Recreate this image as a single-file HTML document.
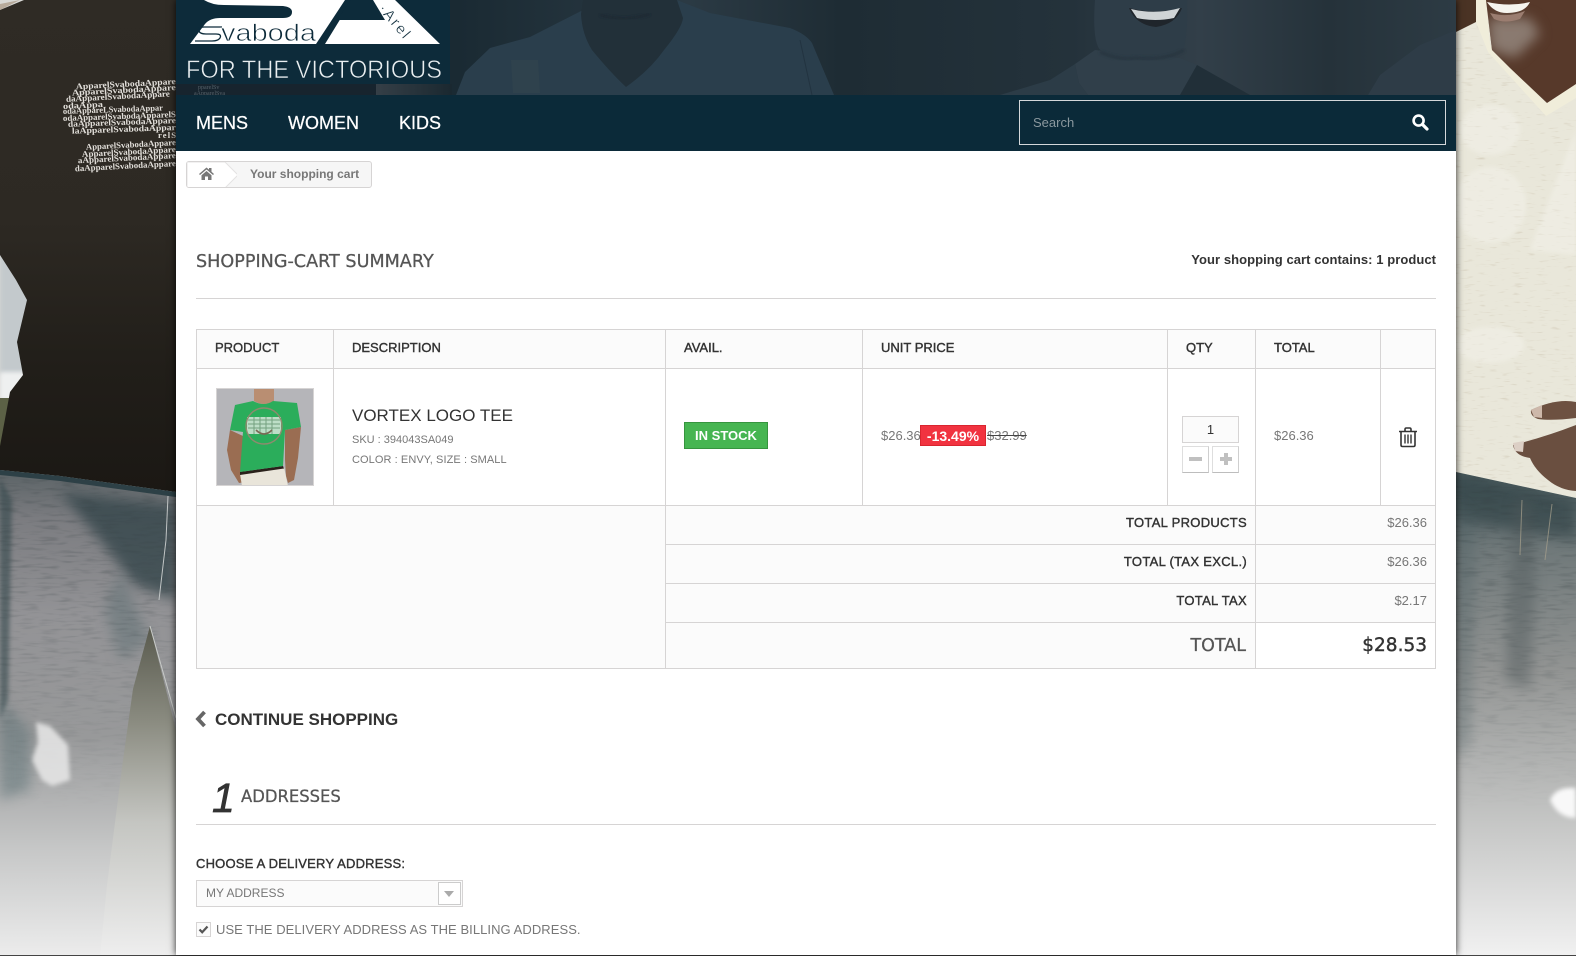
<!DOCTYPE html>
<html lang="en">
<head>
<meta charset="utf-8">
<title>Your shopping cart</title>
<style>
html,body{margin:0;padding:0;width:1576px;height:956px;overflow:hidden;background:#fff;font-family:"Liberation Sans",sans-serif;color:#777}
*{box-sizing:border-box}
.abs,.t{position:absolute}
.t{white-space:nowrap;line-height:20px}
#bg{position:absolute;left:0;top:0}
#panel{position:absolute;left:176px;top:0;width:1280px;height:955px;background:#fff;box-shadow:0 0 7px rgba(0,0,0,.85)}
#head{position:absolute;left:176px;top:0}
#nav{position:absolute;left:176px;top:95px;width:1280px;height:56px;background:#0b2a39}
#search{position:absolute;left:1019px;top:100px;width:427px;height:45px;border:1px solid #d4d8da;background:#0b2a39}
.nl{color:#fff;font-size:18px;top:113px;-webkit-text-stroke:.25px #fff}
.med{color:#333;font-size:13px;-webkit-text-stroke:.4px #333;letter-spacing:.2px}
.od{font-family:"DejaVu Sans",sans-serif;color:#555;-webkit-text-stroke:.25px #555}
#crumb{position:absolute;left:186px;top:161px;width:186px;height:27px;border:1px solid #d6d4d4;border-radius:3px;background:#f6f6f6;overflow:hidden}
#hr1,#hr2{position:absolute;left:196px;width:1240px;height:1px;background:#d6d4d4}
table{position:absolute;left:196px;top:329px;width:1239px;border-collapse:collapse;table-layout:fixed;font-size:13px}
td,th{border:1px solid #d6d4d4;padding:0;font-weight:normal;overflow:hidden}
th{background:#fbfbfb;text-align:left;padding:0 0 4px 18px;color:#333;-webkit-text-stroke:.4px #333;font-size:13px}
.s{background:#fbfbfb}
.lab{text-align:right;padding:0 8px 5px 0;color:#333;-webkit-text-stroke:.4px #333;letter-spacing:.3px}
.val{text-align:right;padding:0 8px 5px 0;color:#777}
</style>
</head>
<body>
<svg id="bg" width="1576" height="956" viewBox="0 0 1576 956" xmlns="http://www.w3.org/2000/svg">
<defs>
<linearGradient id="tee" x1="0" y1="0" x2="0" y2="492" gradientUnits="userSpaceOnUse"><stop offset="0" stop-color="#2f2b25"/><stop offset=".45" stop-color="#2d2923"/><stop offset=".75" stop-color="#211e19"/><stop offset="1" stop-color="#1b1814"/></linearGradient>
<linearGradient id="jeanL" x1="0" y1="470" x2="0" y2="956" gradientUnits="userSpaceOnUse"><stop offset="0" stop-color="#5a6265"/><stop offset=".1" stop-color="#7b7c80"/><stop offset=".3" stop-color="#939396"/><stop offset=".55" stop-color="#98999a"/><stop offset=".78" stop-color="#c6c7c7"/><stop offset="1" stop-color="#ececec"/></linearGradient>
<linearGradient id="jeanR" x1="0" y1="480" x2="0" y2="956" gradientUnits="userSpaceOnUse"><stop offset="0" stop-color="#4a5a5d"/><stop offset=".15" stop-color="#70797a"/><stop offset=".4" stop-color="#929493"/><stop offset=".7" stop-color="#c2c3c2"/><stop offset="1" stop-color="#f1f1f1"/></linearGradient>
<linearGradient id="bgL" x1="0" y1="620" x2="0" y2="956" gradientUnits="userSpaceOnUse"><stop offset="0" stop-color="#55564a"/><stop offset=".3" stop-color="#8a8b80"/><stop offset=".6" stop-color="#c4c5c1"/><stop offset="1" stop-color="#eeeeee"/></linearGradient>
<linearGradient id="mg" x1="0" y1="470" x2="0" y2="956" gradientUnits="userSpaceOnUse"><stop offset="0" stop-color="#fff"/><stop offset=".4" stop-color="#fff" stop-opacity=".5"/><stop offset=".7" stop-color="#fff" stop-opacity="0"/></linearGradient>
<mask id="mf" maskUnits="userSpaceOnUse" x="0" y="0" width="1576" height="956"><rect x="0" y="470" width="1576" height="486" fill="url(#mg)"/></mask>
<filter id="streak" x="0" y="0" width="100%" height="100%" color-interpolation-filters="sRGB"><feTurbulence type="fractalNoise" baseFrequency="0.05 0.35" numOctaves="2" seed="4"/><feColorMatrix values="0 0 0 0 .22  0 0 0 0 .26  0 0 0 0 .27  3 0 0 0 -1.5"/></filter>
<filter id="fleck" x="0" y="0" width="100%" height="100%" color-interpolation-filters="sRGB"><feTurbulence type="fractalNoise" baseFrequency="0.08 0.5" numOctaves="2" seed="9"/><feColorMatrix values="0 0 0 0 .62  0 0 0 0 .54  0 0 0 0 .42  4 0 0 0 -2.5"/></filter>
<filter id="b2" x="-30%" y="-30%" width="160%" height="160%" color-interpolation-filters="sRGB"><feGaussianBlur stdDeviation="2"/></filter>
<filter id="b5" x="-60%" y="-60%" width="220%" height="220%" color-interpolation-filters="sRGB"><feGaussianBlur stdDeviation="6"/></filter>
<clipPath id="cjl"><path d="M0,470 L60,476 L176,492 V730 L150,626 L133,689 L123,760 L107,885 L100,956 H0Z"/></clipPath>
<clipPath id="cjr"><path d="M1456,472 L1576,498 V956 H1456Z"/></clipPath>
<clipPath id="csr"><path d="M1456,30 L1476,20 L1490,50 L1546,103 L1576,84 V498 L1456,472Z"/></clipPath>
<clipPath id="cnk"><path d="M1486,0 H1576 V84 L1547,103 L1510,68 L1492,50Z"/></clipPath>
</defs>

<!-- left figure -->
<rect x="0" y="0" width="176" height="956" fill="#d9d9d6"/>
<rect x="0" y="255" width="40" height="120" fill="#c3c9cc" filter="url(#b2)"/>
<rect x="0" y="372" width="28" height="28" fill="#eef0f0" filter="url(#b2)"/>
<rect x="0" y="398" width="26" height="60" fill="#5c6146"/>
<rect x="0" y="620" width="176" height="336" fill="url(#bgL)"/>
<path d="M0,10 L24,0 H176 V492 L60,476 L0,470 V446 L10,392 L23,375 L17,342 L27,300 L16,280 L0,255Z" fill="url(#tee)"/>
<path d="M0,4 L20,0 L0,10Z" fill="#b7aa9b"/>
<g font-family="Liberation Serif,serif" font-weight="bold" font-size="8.6" fill="#e2dfda">
<text x="76" y="87" textLength="100" lengthAdjust="spacingAndGlyphs" transform="rotate(-3 120 87)">ApparelSvabodaAppare</text>
<text x="72" y="93" textLength="104" lengthAdjust="spacingAndGlyphs" transform="rotate(-3 120 93)">ApparelSvabodaAppare</text>
<text x="66" y="99" textLength="104" lengthAdjust="spacingAndGlyphs" transform="rotate(-3 120 99)">daApparelSvabodaAppare</text>
<text x="63" y="106" textLength="40" lengthAdjust="spacingAndGlyphs" transform="rotate(-3 120 106)">odaAppa</text>
<text x="63" y="112" textLength="100" lengthAdjust="spacingAndGlyphs" transform="rotate(-2 120 112)">odaAppareLSvabodaAppar</text>
<text x="63" y="119" textLength="113" lengthAdjust="spacingAndGlyphs" transform="rotate(-2 120 119)">odaApparelSvabodaApparelS</text>
<text x="68" y="125" textLength="108" lengthAdjust="spacingAndGlyphs" transform="rotate(-2 120 125)">daApparelSvabodaAppare</text>
<text x="72" y="132" textLength="104" lengthAdjust="spacingAndGlyphs" transform="rotate(-2 120 132)">laApparelSvabodaAppar</text>
<text x="158" y="138" textLength="18">relS</text>
<text x="86" y="148" textLength="90" lengthAdjust="spacingAndGlyphs" transform="rotate(-3 120 148)">ApparelSvabodaAppare</text>
<text x="82" y="155" textLength="94" lengthAdjust="spacingAndGlyphs" transform="rotate(-3 120 155)">ApparelSvabodaAppare</text>
<text x="78" y="161" textLength="98" lengthAdjust="spacingAndGlyphs" transform="rotate(-3 120 161)">aApparelSvabodaAppare</text>
<text x="75" y="169" textLength="101" lengthAdjust="spacingAndGlyphs" transform="rotate(-3 120 169)">daApparelSvabodaAppare</text>
</g>
<path d="M0,470 L60,476 L176,492 V730 L150,626 L133,689 L123,760 L107,885 L100,956 H0Z" fill="url(#jeanL)"/>
<g clip-path="url(#cjl)">
<path d="M60,492 L176,505 V600 L135,585 L100,540Z" fill="#35464b" opacity=".8" filter="url(#b5)"/>
<path d="M0,478 L12,500 L8,700 L0,720Z" fill="#34484c" opacity=".6" filter="url(#b2)"/>
<path d="M0,700 L30,730 L30,790 L0,800Z" fill="#5f7478" opacity=".5" filter="url(#b5)"/>
<path d="M120,570 L150,640 L120,660 L105,610Z" fill="#5f7074" opacity=".5" filter="url(#b5)"/>
<g mask="url(#mf)"><rect x="0" y="470" width="176" height="486" fill="#000" filter="url(#streak)" opacity=".3"/></g>
</g>
<path d="M0,470 L60,476 L176,492 V497 L60,481 L0,475Z" fill="#2d4046"/>
<path d="M168,496 L166,540 L159,600" fill="none" stroke="#c2c6c6" stroke-width="1"/>
<path d="M150,626 L176,718" fill="none" stroke="#c8cbc8" stroke-width="1"/>
<path d="M36,722 L50,726 L68,745 L70,780 L52,786 L42,780 L32,760 L38,742Z" fill="#e8e8e8" filter="url(#b2)" opacity=".85"/>

<!-- right figure -->
<rect x="1456" y="0" width="120" height="500" fill="#e9e7da"/>
<rect x="1456" y="20" width="120" height="470" fill="#000" filter="url(#fleck)" clip-path="url(#csr)" opacity=".22"/>
<path d="M1456,0 H1476 V22 L1456,32Z" fill="#4a3324"/>
<path d="M1476,22 L1488,52 L1546,116 L1576,98 V84 L1546,103 L1510,65 L1490,45 L1486,0 H1476Z" fill="#f0edda"/>
<path d="M1486,0 H1576 V84 L1547,103 L1510,68 L1492,50Z" fill="#57392a"/>
<g clip-path="url(#cnk)"><path d="M1488,18 H1530 L1540,34 L1515,58 L1490,50Z" fill="#8a7a70" filter="url(#b5)"/></g>
<path d="M1487,2 Q1510,7 1530,2 Q1525,13 1507,13 Q1494,13 1487,2Z" fill="#f6f4ee"/>
<path d="M1490,13 Q1508,18 1525,11 L1520,19 Q1505,24 1494,19Z" fill="#9b7d70"/>
<g fill="#f6f5ef" opacity=".4" filter="url(#b2)">
<ellipse cx="1490" cy="130" rx="30" ry="25"/>
<ellipse cx="1490" cy="205" rx="36" ry="38"/>
<path d="M1530,250 L1576,130 V255Z"/>
<ellipse cx="1490" cy="345" rx="34" ry="18"/>
</g>
<path d="M1531,410 Q1556,398 1576,402 V418 Q1552,421 1538,419 Q1530,416 1531,410Z" fill="#6d5141"/>
<path d="M1513,445 Q1545,437 1576,425 V491 Q1560,490 1548,480 Q1535,470 1530,458 Q1515,456 1513,445Z" fill="#6a4f40"/>
<path d="M1513,443 L1524,441 L1523,452 L1515,451Z" fill="#dccfc5"/>
<path d="M1531,410 L1542,405 L1542,418 L1534,417Z" fill="#cdb8aa"/>
<path d="M1456,472 L1576,498 V956 H1456Z" fill="url(#jeanR)"/>
<g clip-path="url(#cjr)">
<path d="M1456,475 L1576,500 V540 L1456,520Z" fill="#2f4145" opacity=".6" filter="url(#b5)"/>
<g mask="url(#mf)"><rect x="1456" y="472" width="120" height="484" fill="#000" filter="url(#streak)" opacity=".35"/></g>
<path d="M1514,500 L1510,580 L1505,680 L1530,690 L1535,580 L1530,500Z" fill="#50595b" opacity=".45" filter="url(#b5)"/>
<path d="M1456,500 V760 L1470,740 L1475,520Z" fill="#4d6064" opacity=".35" filter="url(#b5)"/>
</g>
<path d="M1522,500 L1520,555 M1552,504 L1545,560" stroke="#a9a38f" stroke-width="1" fill="none" opacity=".7"/>
<path d="M1550,800 Q1556,786 1576,788 V818 Q1558,818 1550,800Z" fill="#f8f8f8" filter="url(#b2)"/>
<rect x="0" y="955" width="1576" height="1" fill="#444"/>
</svg>

<div id="panel"></div>

<svg id="head" width="1280" height="95" viewBox="176 0 1280 95" xmlns="http://www.w3.org/2000/svg">
<defs>
<linearGradient id="hb" x1="0" x2="1" y1="0" y2="0"><stop offset="0" stop-color="#16252f"/><stop offset=".22" stop-color="#1a2a33"/><stop offset=".4" stop-color="#2b3a44"/><stop offset=".52" stop-color="#1e2c34"/><stop offset=".7" stop-color="#24323b"/><stop offset=".8" stop-color="#323f49"/><stop offset=".9" stop-color="#25323a"/><stop offset="1" stop-color="#2d3b44"/></linearGradient>
<linearGradient id="lg" x1="0" x2="1" y1="0" y2="0"><stop offset="0" stop-color="#353f47"/><stop offset="1" stop-color="#1a2830"/></linearGradient>
<filter id="hbl" x="-20%" y="-20%" width="140%" height="140%"><feGaussianBlur stdDeviation="1.2"/></filter>
</defs>
<rect x="176" y="0" width="1280" height="95" fill="url(#hb)"/>
<rect x="376" y="84" width="76" height="11" fill="url(#lg)"/>
<rect x="176" y="84" width="200" height="11" fill="#17242e"/>
<text x="198" y="89" font-family="Liberation Serif,serif" font-size="6" fill="#56626a">pparelSv</text>
<text x="194" y="95" font-family="Liberation Serif,serif" font-size="6" fill="#56626a">aApparelSva</text>
<!-- first person -->
<path d="M456,95 L465,72 L490,48 L530,37 L583,10 L677,0 L710,13 L790,28 Q806,34 812,43 L834,95Z" fill="#2a3e4c"/>
<path d="M583,0 L581,14 Q582,34 592,50 Q610,72 626,87 Q650,70 664,50 Q682,28 683,18 L677,0Z" fill="#223039"/>
<path d="M511,60 L538,60 L540,93 L513,93Z" fill="#33464f" opacity=".6"/>
<path d="M800,40 L812,95" stroke="#223340" stroke-width="1" fill="none"/>
<path d="M600,15 Q625,22 650,14" stroke="#1a2830" stroke-width="2" fill="none" filter="url(#hbl)"/>
<!-- second person -->
<path d="M1000,95 L1050,80 L1075,64 L1079,83 L1088,95Z" fill="#2c3c47"/>
<path d="M1075,64 L1095,50 L1180,58 L1197,65 L1180,95 H1088 L1079,83Z" fill="#303f4a"/>
<path d="M1095,0 Q1092,40 1100,50 Q1120,60 1136,57 Q1165,60 1184,48 Q1188,30 1187,0Z" fill="#2e3d48"/>
<path d="M1197,65 L1250,95 L1180,95Z" fill="#212f38"/>
<path d="M1100,52 Q1120,61 1136,58 Q1165,61 1184,50" fill="none" stroke="#28363f" stroke-width="3" filter="url(#hbl)"/>
<path d="M1129,8 Q1155,15 1182,8 Q1176,24 1156,27 Q1136,25 1129,8Z" fill="#1f252b"/>
<path d="M1131,9 Q1155,15 1180,8 L1174,18 Q1155,22 1137,18Z" fill="#cfd4d6"/>
<!-- third person -->
<path d="M1368,95 L1380,75 L1420,45 L1456,30 V95Z" fill="#2e3c47"/>
<!-- logo panel -->
<rect x="176" y="0" width="274" height="84" fill="#0d2b3a"/>
<path d="M204,0 Q212,5 224,5 L283,6 Q292,7 292,12 Q292,18 283,18 L220,18 Q210,18 205,24 L190,44 H316 L345,0Z" fill="#fff"/>
<path d="M325,44 H440 L393,-2 L393,0 H352Z" fill="#fff"/>
<path d="M351,0 L337,20 H385 L373,0Z" fill="#0d2b3a"/>
<text x="378" y="9" font-family="Liberation Sans,sans-serif" font-size="15" fill="#0d2b3a" stroke="#fff" stroke-width=".3" transform="rotate(50 378 9)" letter-spacing="2">·Arel</text>
<path d="M222,27 H204 Q197,27 199,31 Q200,34 206,34 H216 Q222,34 220,38 Q218,41 212,41 H195" fill="none" stroke="#0d2b3a" stroke-width="1.3"/>
<text x="221" y="41" font-family="Liberation Sans,sans-serif" font-size="24" fill="#0d2b3a" stroke="#fff" stroke-width=".7" textLength="95" lengthAdjust="spacingAndGlyphs">vaboda</text>
<text x="186" y="78" font-family="Liberation Sans,sans-serif" font-size="25" fill="#e9eef0" stroke="#0d2b3a" stroke-width=".6" textLength="256" lengthAdjust="spacingAndGlyphs">FOR THE VICTORIOUS</text>
</svg>

<div id="nav"></div>
<div class="t nl" style="left:196px">MENS</div>
<div class="t nl" style="left:288px">WOMEN</div>
<div class="t nl" style="left:399px">KIDS</div>
<div id="search"></div>
<div class="t" style="left:1033px;top:113px;font-size:13px;color:#8b989e">Search</div>
<svg class="abs" style="left:1410px;top:112px" width="22" height="22" viewBox="0 0 22 22"><circle cx="8.6" cy="8.6" r="5" fill="none" stroke="#fff" stroke-width="2.6"/><path d="M12.4,12.4 L17,17" stroke="#fff" stroke-width="3.2" stroke-linecap="round"/></svg>

<div id="crumb">
<svg class="abs" style="left:0;top:0" width="50" height="25" viewBox="0 0 50 25"><path d="M0,0 H38 L51,13 L38,26 H0Z" fill="#fff" stroke="#e4e3e3"/><path d="M12,12 L19.5,5.5 L22,7.6 V6 H24.5 V9.7 L27,12 L26,13 L19.5,7.5 L13,13Z M14.5,13.2 L19.5,9 L24.5,13.2 V18 H21 V14.5 H18 V18 H14.5Z" fill="#777"/></svg>
</div>
<div class="t" style="left:250px;top:164px;font-size:12px;font-weight:bold;color:#777">Your shopping cart</div>

<div class="t od" style="left:196px;top:252px;font-size:17.6px">SHOPPING-CART SUMMARY</div>
<div class="t" style="right:140px;top:250px;font-size:13px;font-weight:bold;color:#333;letter-spacing:.06px">Your shopping cart contains: 1 product</div>
<div id="hr1" style="top:298px"></div>

<table>
<colgroup><col style="width:137px"><col style="width:332px"><col style="width:197px"><col style="width:305px"><col style="width:88px"><col style="width:125px"><col style="width:55px"></colgroup>
<tr style="height:39px"><th>PRODUCT</th><th>DESCRIPTION</th><th>AVAIL.</th><th>UNIT PRICE</th><th>QTY</th><th>TOTAL</th><th></th></tr>
<tr style="height:137px"><td></td><td></td><td></td><td></td><td></td><td></td><td></td></tr>
<tr style="height:39px"><td class="s" colspan="2" rowspan="4"></td><td class="s lab" colspan="3">TOTAL PRODUCTS</td><td class="s val" colspan="2">$26.36</td></tr>
<tr style="height:39px"><td class="s lab" colspan="3">TOTAL (TAX EXCL.)</td><td class="s val" colspan="2">$26.36</td></tr>
<tr style="height:39px"><td class="s lab" colspan="3">TOTAL TAX</td><td class="s val" colspan="2">$2.17</td></tr>
<tr style="height:46px"><td class="s lab" colspan="3" style="font-size:17.5px;color:#555;-webkit-text-stroke:.25px #555;font-family:'DejaVu Sans',sans-serif;padding:0 9px 0 0;letter-spacing:0">TOTAL</td><td class="val" colspan="2" style="font-size:18.5px;color:#333;-webkit-text-stroke:.4px #333;font-family:'DejaVu Sans',sans-serif;background:#fff;padding-bottom:0">$28.53</td></tr>
</table>

<!-- product image -->
<svg class="abs" style="left:216px;top:388px" width="98" height="98" viewBox="0 0 98 98" xmlns="http://www.w3.org/2000/svg">
<rect width="98" height="98" fill="#b5b5b9"/>
<path d="M38,0 H58 V13 Q48,19 38,13Z" fill="#b98e72"/>
<path d="M14,42 L11,62 L15,82 L23,95 L30,94 L26,78 L27,48Z" fill="#9a6d52"/>
<path d="M85,39 L69,42 L69,72 L70,88 L72,95 L78,92 L82,70Z" fill="#9a6d52"/>
<path d="M24,86 L68,79 L72,98 H26Z" fill="#e9e5da"/>
<path d="M24,84 L67,78 L68,80.5 L24,87Z" fill="#2a211b"/>
<path d="M37,13 Q48,19 57,13 L81,15 L85,39 L69,42 L67,78 L24,84 L27,44 L14,42 L19,17Z" fill="#2bad5b"/>
<path d="M31,29 H65 V46 H31Z" fill="#d7e6da" opacity=".85"/>
<circle cx="48" cy="38" r="18" fill="none" stroke="#8f8a6e" stroke-width="1.4"/>
<path d="M32,32 H64 M32,36 H64 M32,40 H64 M38,29 V46 M44,29 V46 M50,29 V46 M56,29 V46" stroke="#74a07f" stroke-width="1"/>
<path d="M40,42 Q48,50 56,42" fill="none" stroke="#7a6a55" stroke-width="1.6"/>
<rect x=".5" y=".5" width="97" height="97" fill="none" stroke="#d6d4d4"/>
</svg>

<div class="t" style="left:352px;top:406px;font-size:17px;color:#333">VORTEX LOGO TEE</div>
<div class="t" style="left:352px;top:430px;font-size:11px;color:#777">SKU : 394043SA049</div>
<div class="t" style="left:352px;top:450px;font-size:11px;color:#777;letter-spacing:.08px">COLOR : ENVY, SIZE : SMALL</div>

<div class="abs" style="left:684px;top:422px;width:84px;height:27px;background:#46b551;border:1px solid #36943e;color:#fff;font-weight:bold;font-size:13px;line-height:25px;text-align:center">IN STOCK</div>

<div class="t" style="left:881px;top:426px;font-size:13px;color:#777">$26.36</div>
<div class="abs" style="left:920px;top:425px;width:66px;height:21px;background:#f13340;border:1px solid #d9252f;color:#fff;font-weight:bold;font-size:14px;line-height:20px;text-align:center">-13.49%</div>
<div class="t" style="left:987px;top:426px;font-size:13px;color:#777;text-decoration:line-through;text-decoration-color:#444">$32.99</div>

<div class="abs" style="left:1182px;top:416px;width:57px;height:27px;background:#fbfbfb;border:1px solid #d6d4d4;color:#333;font-size:13px;line-height:25px;text-align:center">1</div>
<div class="abs" style="left:1182px;top:446px;width:27px;height:27px;background:#fff;border:1px solid #dedede;border-bottom-color:#bdbdbd;border-right-color:#cfcfcf"><div class="abs" style="left:6px;top:10px;width:13px;height:4px;background:#c0c0c0"></div></div>
<div class="abs" style="left:1212px;top:446px;width:27px;height:27px;background:#fff;border:1px solid #dedede;border-bottom-color:#bdbdbd;border-right-color:#cfcfcf"><div class="abs" style="left:7px;top:10px;width:12px;height:4px;background:#c0c0c0"></div><div class="abs" style="left:11px;top:6px;width:4px;height:12px;background:#c0c0c0"></div></div>

<div class="t" style="left:1274px;top:426px;font-size:13px;color:#777">$26.36</div>
<svg class="abs" style="left:1397px;top:426px" width="22" height="22" viewBox="0 0 22 22"><path d="M2,5.5 H20 M8,5 V3.4 Q8,2 9.4,2 H12.6 Q14,2 14,3.4 V5 M4,5.5 V19 Q4,20.5 5.5,20.5 H16.5 Q18,20.5 18,19 V5.5" fill="none" stroke="#333" stroke-width="1.6"/><path d="M8,8.5 V17.5 M11,8.5 V17.5 M14,8.5 V17.5" stroke="#333" stroke-width="1.4"/></svg>

<svg class="abs" style="left:195px;top:710px" width="12" height="18" viewBox="0 0 12 18"><path d="M9.5,2 L3,9 L9.5,16" fill="none" stroke="#666" stroke-width="3.8"/></svg>
<div class="t" style="left:215px;top:710px;font-size:17px;font-weight:bold;color:#333">CONTINUE SHOPPING</div>

<div class="t" style="left:212px;top:777px;font-size:41px;line-height:42px;font-style:italic;color:#333;-webkit-text-stroke:.7px #333">1</div>
<div class="t od" style="left:241px;top:787px;font-size:16.4px">ADDRESSES</div>
<div id="hr2" style="top:824px"></div>

<div class="t med" style="left:196px;top:854px">CHOOSE A DELIVERY ADDRESS:</div>
<div class="abs" style="left:196px;top:880px;width:267px;height:27px;background:#fbfbfb;border:1px solid #d6d4d4"></div>
<div class="t" style="left:206px;top:883px;font-size:12px;color:#777">MY ADDRESS</div>
<div class="abs" style="left:438px;top:882px;width:23px;height:23px;background:#fff;border:1px solid #ccc"><div class="abs" style="left:5px;top:8px;width:0;height:0;border-left:5.5px solid transparent;border-right:5.5px solid transparent;border-top:6px solid #aaa"></div></div>
<div class="abs" style="left:196px;top:922px;width:15px;height:15px;background:#fbfbfb;border:1px solid #d6d4d4"></div>
<svg class="abs" style="left:197px;top:923px" width="13" height="13" viewBox="0 0 13 13"><path d="M2.5,6.5 L5.2,9.3 L10.5,3.5" fill="none" stroke="#555" stroke-width="2.2"/></svg>
<div class="t" style="left:216px;top:920px;font-size:13px;color:#777;letter-spacing:.06px">USE THE DELIVERY ADDRESS AS THE BILLING ADDRESS.</div>
</body>
</html>
